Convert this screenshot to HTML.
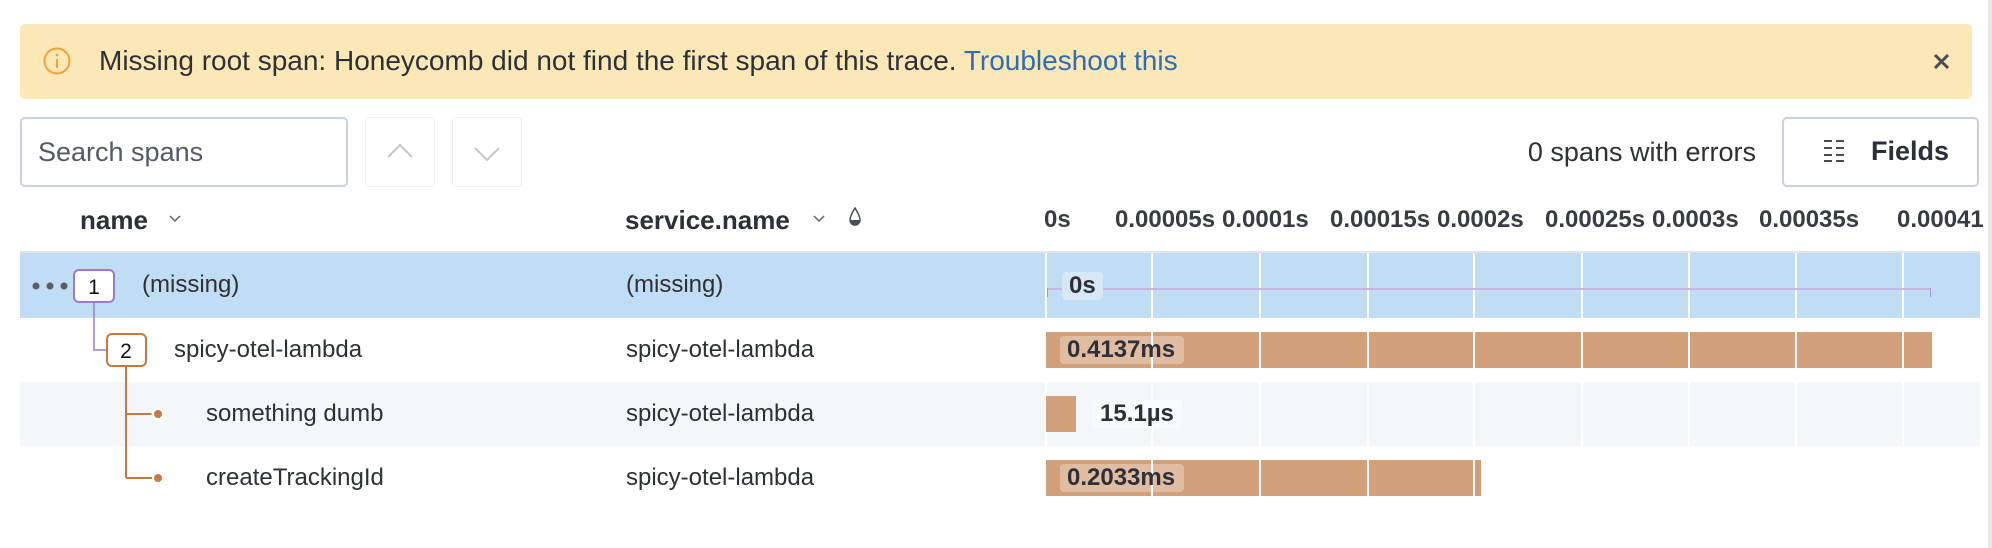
<!DOCTYPE html>
<html><head><style>
*{box-sizing:border-box;margin:0;padding:0}
body{width:1992px;height:548px;background:#fff;font-family:"Liberation Sans",sans-serif;color:#2e3038;position:relative;overflow:hidden}
.a{position:absolute}
.t{position:absolute;font-size:24px;line-height:28px;white-space:nowrap}
.h{position:absolute;font-size:24px;line-height:28px;top:206px;font-weight:bold;color:#3a3c44;white-space:nowrap}
.grid{position:absolute;top:253px;width:2px;height:257px;background:#fff}
</style></head><body>
<div class="a" style="right:0;top:0;width:4px;height:548px;background:#e8e8e8"></div>
<div class="a" style="left:20px;top:24px;width:1952px;height:75px;background:#fbe8b6;border-radius:5px"></div>
<svg class="a" style="left:42px;top:46px" width="30" height="30" viewBox="0 0 30 30"><circle cx="15" cy="15" r="12.5" fill="none" stroke="#f0a23a" stroke-width="2"/><rect x="14" y="13" width="2" height="9" fill="#f0a23a"/><circle cx="15" cy="9" r="1.4" fill="#f0a23a"/></svg>
<div class="t" style="left:99px;top:45px;font-size:28px;line-height:32px;color:#2e3038">Missing root span: Honeycomb did not find the first span of this trace. <span style="color:#2f6cb3">Troubleshoot this</span></div>
<svg class="a" style="left:1933px;top:53px" width="17" height="17" viewBox="0 0 17 17"><path d="M2 2L15 15M15 2L2 15" stroke="#4a4d55" stroke-width="3"/></svg>

<div class="a" style="left:20px;top:117px;width:328px;height:70px;border:2px solid #cbd1de;border-radius:5px"></div>
<div class="t" style="left:38px;top:137px;font-size:27px;line-height:30px;color:#565a66">Search spans</div>
<div class="a" style="left:365px;top:117px;width:70px;height:70px;border:1px solid #f0f1f4;border-radius:4px"></div>
<div class="a" style="left:452px;top:117px;width:70px;height:70px;border:1px solid #f0f1f4;border-radius:4px"></div>
<svg class="a" style="left:386px;top:142px" width="28" height="18"><path d="M2 15L14 3L26 15" fill="none" stroke="#c4c6cc" stroke-width="2"/></svg>
<svg class="a" style="left:473px;top:145px" width="28" height="18"><path d="M2 3L14 15L26 3" fill="none" stroke="#c4c6cc" stroke-width="2"/></svg>
<div class="t" style="right:236px;top:137px;font-size:27px;line-height:30px">0 spans with errors</div>
<div class="a" style="left:1782px;top:117px;width:197px;height:70px;border:2px solid #cbd1de;border-radius:5px"></div>
<svg class="a" style="left:1823px;top:139px" width="24" height="24"><g stroke="#4a4d55" stroke-width="2"><path d="M1 2h8M13 2h8M1 9h8M13 9h8M1 16h8M13 16h8M1 22h8M13 22h8"/></g></svg>
<div class="t" style="left:1871px;top:136px;font-size:27px;line-height:30px;font-weight:bold">Fields</div>

<div class="t" style="left:80px;top:205px;font-size:26px;line-height:30px;font-weight:bold">name</div>
<svg class="a" style="left:168px;top:214px" width="14" height="10"><path d="M2 2L7 7L12 2" fill="none" stroke="#666" stroke-width="1.5"/></svg>
<div class="t" style="left:625px;top:205px;font-size:26px;line-height:30px;font-weight:bold">service.name</div>
<svg class="a" style="left:812px;top:214px" width="14" height="10"><path d="M2 2L7 7L12 2" fill="none" stroke="#666" stroke-width="1.5"/></svg>
<svg class="a" style="left:848px;top:207px" width="14" height="22"><path d="M7 1C7 1 2 9 2 13a5 5 0 0 0 10 0C12 9 7 1 7 1z" fill="none" stroke="#4a4d55" stroke-width="1.5"/><path d="M2 13a5 5 0 0 0 10 0z" fill="#4a4d55"/></svg>
<div class="h" style="left:1044px">0s</div>
<div class="h" style="left:1115px">0.00005s</div>
<div class="h" style="left:1222px">0.0001s</div>
<div class="h" style="left:1330px">0.00015s</div>
<div class="h" style="left:1437px">0.0002s</div>
<div class="h" style="left:1545px">0.00025s</div>
<div class="h" style="left:1652px">0.0003s</div>
<div class="h" style="left:1759px">0.00035s</div>
<div class="h" style="left:1897px">0.00041</div>

<div class="a" style="left:20px;top:251px;width:1960px;height:2px;background:#dfe3ea"></div>
<div class="a" style="left:20px;top:253px;width:1960px;height:65px;background:#c0ddf3"></div>
<div class="a" style="left:20px;top:382px;width:1960px;height:64px;background:#f5f6fa"></div>

<div class="grid" style="left:1045px"></div><div class="grid" style="left:1151px"></div><div class="grid" style="left:1259px"></div><div class="grid" style="left:1367px"></div><div class="grid" style="left:1473px"></div><div class="grid" style="left:1581px"></div><div class="grid" style="left:1688px"></div><div class="grid" style="left:1795px"></div><div class="grid" style="left:1902px"></div>

<div class="a" style="left:1047px;top:288px;width:884px;height:2px;background:#c7b6df"></div>
<div class="a" style="left:1047px;top:288px;width:1px;height:9px;background:#a990d6"></div>
<div class="a" style="left:1930px;top:288px;width:1px;height:9px;background:#a990d6"></div>
<div class="a" style="left:1062px;top:272px;width:41px;height:28px;background:#d6e8f6;border-radius:4px"></div>
<div class="t" style="left:1069px;top:272px;font-weight:bold">0s</div>

<svg class="a" style="left:1046px;top:332px" width="886" height="36"><rect width="886" height="36" fill="#d2a07a"/><g fill="#fff"><rect x="105" width="2" height="36"/><rect x="213" width="2" height="36"/><rect x="321" width="2" height="36"/><rect x="427" width="2" height="36"/><rect x="535" width="2" height="36"/><rect x="642" width="2" height="36"/><rect x="749" width="2" height="36"/><rect x="856" width="2" height="36"/></g></svg>
<div class="a" style="left:1060px;top:336px;width:124px;height:28px;background:rgba(255,255,255,.3);border-radius:4px"></div>
<div class="t" style="left:1067px;top:336px;font-weight:bold">0.4137ms</div>

<div class="a" style="left:1046px;top:396px;width:30px;height:36px;background:#d2a07a"></div>
<div class="a" style="left:1092px;top:400px;width:90px;height:28px;background:#f9fafc;border-radius:4px"></div>
<div class="t" style="left:1100px;top:400px;font-weight:bold">15.1µs</div>

<svg class="a" style="left:1046px;top:460px" width="435" height="36"><rect width="435" height="36" fill="#d2a07a"/><g fill="#fff"><rect x="105" width="2" height="36"/><rect x="213" width="2" height="36"/><rect x="321" width="2" height="36"/><rect x="427" width="2" height="36"/></g></svg>
<div class="a" style="left:1060px;top:464px;width:124px;height:28px;background:rgba(255,255,255,.3);border-radius:4px"></div>
<div class="t" style="left:1067px;top:464px;font-weight:bold">0.2033ms</div>

<svg class="a" style="left:0;top:250px" width="200" height="250">
<g fill="#5a5d66"><circle cx="36" cy="36" r="3.5"/><circle cx="50" cy="36" r="3.5"/><circle cx="64" cy="36" r="3.5"/></g>
<path d="M94 52V100H106" fill="none" stroke="#9b7bd0" stroke-width="1.5"/>
<rect x="74" y="20" width="40" height="32" rx="5" fill="#fff" stroke="#9b7bd0" stroke-width="2"/>
<path d="M126 116V228M126 164H152M126 228H152" fill="none" stroke="#c87941" stroke-width="2"/>
<rect x="107" y="84" width="39" height="32" rx="5" fill="#fff" stroke="#c87941" stroke-width="2"/>
<circle cx="158" cy="164" r="6.5" fill="#fff"/><circle cx="158" cy="164" r="4" fill="#c87941"/>
<circle cx="158" cy="228" r="4" fill="#c87941"/>
<text x="94" y="44" font-size="21" text-anchor="middle" fill="#111" font-family="Liberation Sans">1</text>
<text x="126" y="108" font-size="21" text-anchor="middle" fill="#111" font-family="Liberation Sans">2</text>
</svg>

<div class="t" style="left:142px;top:271px">(missing)</div>
<div class="t" style="left:626px;top:271px">(missing)</div>
<div class="t" style="left:174px;top:336px">spicy-otel-lambda</div>
<div class="t" style="left:626px;top:336px">spicy-otel-lambda</div>
<div class="t" style="left:206px;top:400px">something dumb</div>
<div class="t" style="left:626px;top:400px">spicy-otel-lambda</div>
<div class="t" style="left:206px;top:464px">createTrackingId</div>
<div class="t" style="left:626px;top:464px">spicy-otel-lambda</div>
</body></html>
